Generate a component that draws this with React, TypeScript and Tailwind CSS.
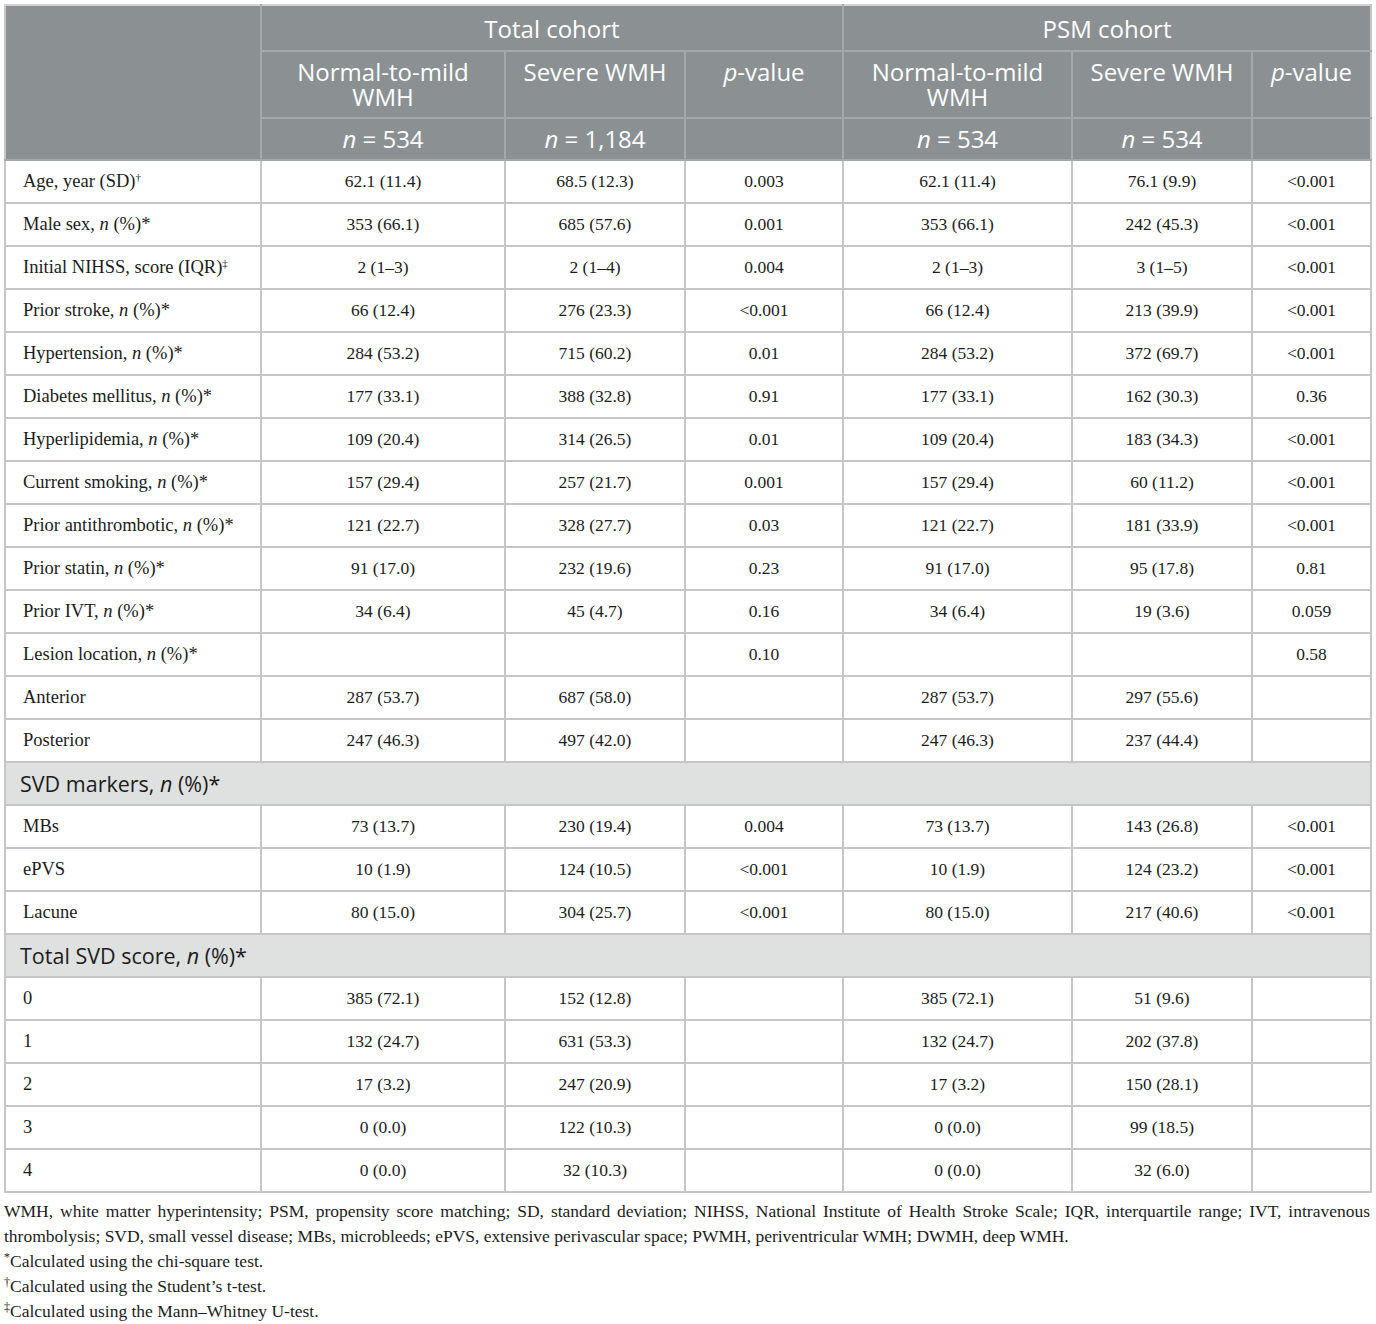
import React from "react";

type Row = {
  label: React.ReactNode;
  cells: string[];
};

const N = () => <i>n</i>;

const rows: (Row | { section: React.ReactNode })[] = [
  { label: <>Age, year (SD)<sup className="text-[11px]">†</sup></>, cells: ["62.1 (11.4)", "68.5 (12.3)", "0.003", "62.1 (11.4)", "76.1 (9.9)", "<0.001"] },
  { label: <>Male sex, <N /> (%)*</>, cells: ["353 (66.1)", "685 (57.6)", "0.001", "353 (66.1)", "242 (45.3)", "<0.001"] },
  { label: <>Initial NIHSS, score (IQR)<sup className="text-[11px]">‡</sup></>, cells: ["2 (1–3)", "2 (1–4)", "0.004", "2 (1–3)", "3 (1–5)", "<0.001"] },
  { label: <>Prior stroke, <N /> (%)*</>, cells: ["66 (12.4)", "276 (23.3)", "<0.001", "66 (12.4)", "213 (39.9)", "<0.001"] },
  { label: <>Hypertension, <N /> (%)*</>, cells: ["284 (53.2)", "715 (60.2)", "0.01", "284 (53.2)", "372 (69.7)", "<0.001"] },
  { label: <>Diabetes mellitus, <N /> (%)*</>, cells: ["177 (33.1)", "388 (32.8)", "0.91", "177 (33.1)", "162 (30.3)", "0.36"] },
  { label: <>Hyperlipidemia, <N /> (%)*</>, cells: ["109 (20.4)", "314 (26.5)", "0.01", "109 (20.4)", "183 (34.3)", "<0.001"] },
  { label: <>Current smoking, <N /> (%)*</>, cells: ["157 (29.4)", "257 (21.7)", "0.001", "157 (29.4)", "60 (11.2)", "<0.001"] },
  { label: <>Prior antithrombotic, <N /> (%)*</>, cells: ["121 (22.7)", "328 (27.7)", "0.03", "121 (22.7)", "181 (33.9)", "<0.001"] },
  { label: <>Prior statin, <N /> (%)*</>, cells: ["91 (17.0)", "232 (19.6)", "0.23", "91 (17.0)", "95 (17.8)", "0.81"] },
  { label: <>Prior IVT, <N /> (%)*</>, cells: ["34 (6.4)", "45 (4.7)", "0.16", "34 (6.4)", "19 (3.6)", "0.059"] },
  { label: <>Lesion location, <N /> (%)*</>, cells: ["", "", "0.10", "", "", "0.58"] },
  { label: "Anterior", cells: ["287 (53.7)", "687 (58.0)", "", "287 (53.7)", "297 (55.6)", ""] },
  { label: "Posterior", cells: ["247 (46.3)", "497 (42.0)", "", "247 (46.3)", "237 (44.4)", ""] },
  { section: <>SVD markers, <i>n</i> (%)*</> },
  { label: "MBs", cells: ["73 (13.7)", "230 (19.4)", "0.004", "73 (13.7)", "143 (26.8)", "<0.001"] },
  { label: "ePVS", cells: ["10 (1.9)", "124 (10.5)", "<0.001", "10 (1.9)", "124 (23.2)", "<0.001"] },
  { label: "Lacune", cells: ["80 (15.0)", "304 (25.7)", "<0.001", "80 (15.0)", "217 (40.6)", "<0.001"] },
  { section: <>Total SVD score, <i>n</i> (%)*</> },
  { label: "0", cells: ["385 (72.1)", "152 (12.8)", "", "385 (72.1)", "51 (9.6)", ""] },
  { label: "1", cells: ["132 (24.7)", "631 (53.3)", "", "132 (24.7)", "202 (37.8)", ""] },
  { label: "2", cells: ["17 (3.2)", "247 (20.9)", "", "17 (3.2)", "150 (28.1)", ""] },
  { label: "3", cells: ["0 (0.0)", "122 (10.3)", "", "0 (0.0)", "99 (18.5)", ""] },
  { label: "4", cells: ["0 (0.0)", "32 (10.3)", "", "0 (0.0)", "32 (6.0)", ""] },
];

const hd =
  "border-2 border-[#a3a8aa] bg-[#8b9193] text-white font-['Open_Sans',sans-serif] text-[24px] font-normal text-center";
const bd =
  "border-2 border-[#c6c6c6] font-['Liberation_Serif',serif] text-[17.5px] text-[#1c1c1c] text-center align-middle";

export default function App() {
  return (
    <div className="bg-white w-[1376px] h-[1324px] pt-[4px] pl-[4px]">
      <table className="border-collapse table-fixed w-[1366px]">
        <colgroup>
          <col className="w-[256px]" />
          <col className="w-[244px]" />
          <col className="w-[180px]" />
          <col className="w-[158px]" />
          <col className="w-[229px]" />
          <col className="w-[180px]" />
          <col className="w-[119px]" />
        </colgroup>
        <thead>
          <tr className="h-[46px]">
            <th rowSpan={3} className={`${hd} border-t-[#d2d2d2] border-l-[#c6c6c6]`}></th>
            <th colSpan={3} className={`${hd} border-t-[#d2d2d2] leading-[26px] align-middle pt-[2px]`}>
              Total cohort
            </th>
            <th colSpan={3} className={`${hd} border-t-[#d2d2d2] border-r-[#c6c6c6] leading-[26px] align-middle pt-[2px]`}>
              PSM cohort
            </th>
          </tr>
          <tr className="h-[67px]">
            <th className={`${hd} align-top pt-[7px] leading-[25px]`}>
              <span className="block">Normal-to-mild</span>
              <span className="block">WMH</span>
            </th>
            <th className={`${hd} align-top pt-[7px] leading-[25px]`}>Severe WMH</th>
            <th className={`${hd} align-top pt-[7px] leading-[25px]`}>
              <i>p</i>-value
            </th>
            <th className={`${hd} align-top pt-[7px] leading-[25px]`}>
              <span className="block">Normal-to-mild</span>
              <span className="block">WMH</span>
            </th>
            <th className={`${hd} align-top pt-[7px] leading-[25px]`}>Severe WMH</th>
            <th className={`${hd} border-r-[#c6c6c6] align-top pt-[7px] leading-[25px]`}>
              <i>p</i>-value
            </th>
          </tr>
          <tr className="h-[42px]">
            <th className={`${hd} align-middle leading-[26px]`}>
              <i>n</i> = 534
            </th>
            <th className={`${hd} align-middle leading-[26px]`}>
              <i>n</i> = 1,184
            </th>
            <th className={`${hd}`}></th>
            <th className={`${hd} align-middle leading-[26px]`}>
              <i>n</i> = 534
            </th>
            <th className={`${hd} align-middle leading-[26px]`}>
              <i>n</i> = 534
            </th>
            <th className={`${hd} border-r-[#c6c6c6]`}></th>
          </tr>
        </thead>
        <tbody>
          {rows.map((r, i) =>
            "section" in r ? (
              <tr key={i} className="h-[43px]">
                <td
                  colSpan={7}
                  className="border-2 border-[#c6c6c6] bg-[#dfe0e0] pl-[14px] text-left align-middle font-['Open_Sans',sans-serif] text-[21.5px] text-[#1c1c1c] leading-[24px]"
                >
                  {r.section}
                </td>
              </tr>
            ) : (
              <tr key={i} className="h-[43px]">
                <td className={`${bd} text-left pl-[17px] text-[18.5px]`}>{r.label}</td>
                {r.cells.map((c, j) => (
                  <td key={j} className={bd}>
                    {c}
                  </td>
                ))}
              </tr>
            )
          )}
        </tbody>
      </table>
      <div className="w-[1366px] mt-[6px] font-['Liberation_Serif',serif] text-[17.5px] leading-[25px] text-[#1c1c1c]">
        <p className="text-justify [text-align-last:justify] whitespace-nowrap">
          WMH, white matter hyperintensity; PSM, propensity score matching; SD, standard deviation; NIHSS, National
          Institute of Health Stroke Scale; IQR, interquartile range; IVT, intravenous
        </p>
        <p>
          thrombolysis; SVD, small vessel disease; MBs, microbleeds; ePVS, extensive perivascular space; PWMH,
          periventricular WMH; DWMH, deep WMH.
        </p>
        <p>
          <sup className="text-[12px]">*</sup>Calculated using the chi-square test.
        </p>
        <p>
          <sup className="text-[12px]">†</sup>Calculated using the Student’s t-test.
        </p>
        <p>
          <sup className="text-[12px]">‡</sup>Calculated using the Mann–Whitney U-test.
        </p>
      </div>
    </div>
  );
}
